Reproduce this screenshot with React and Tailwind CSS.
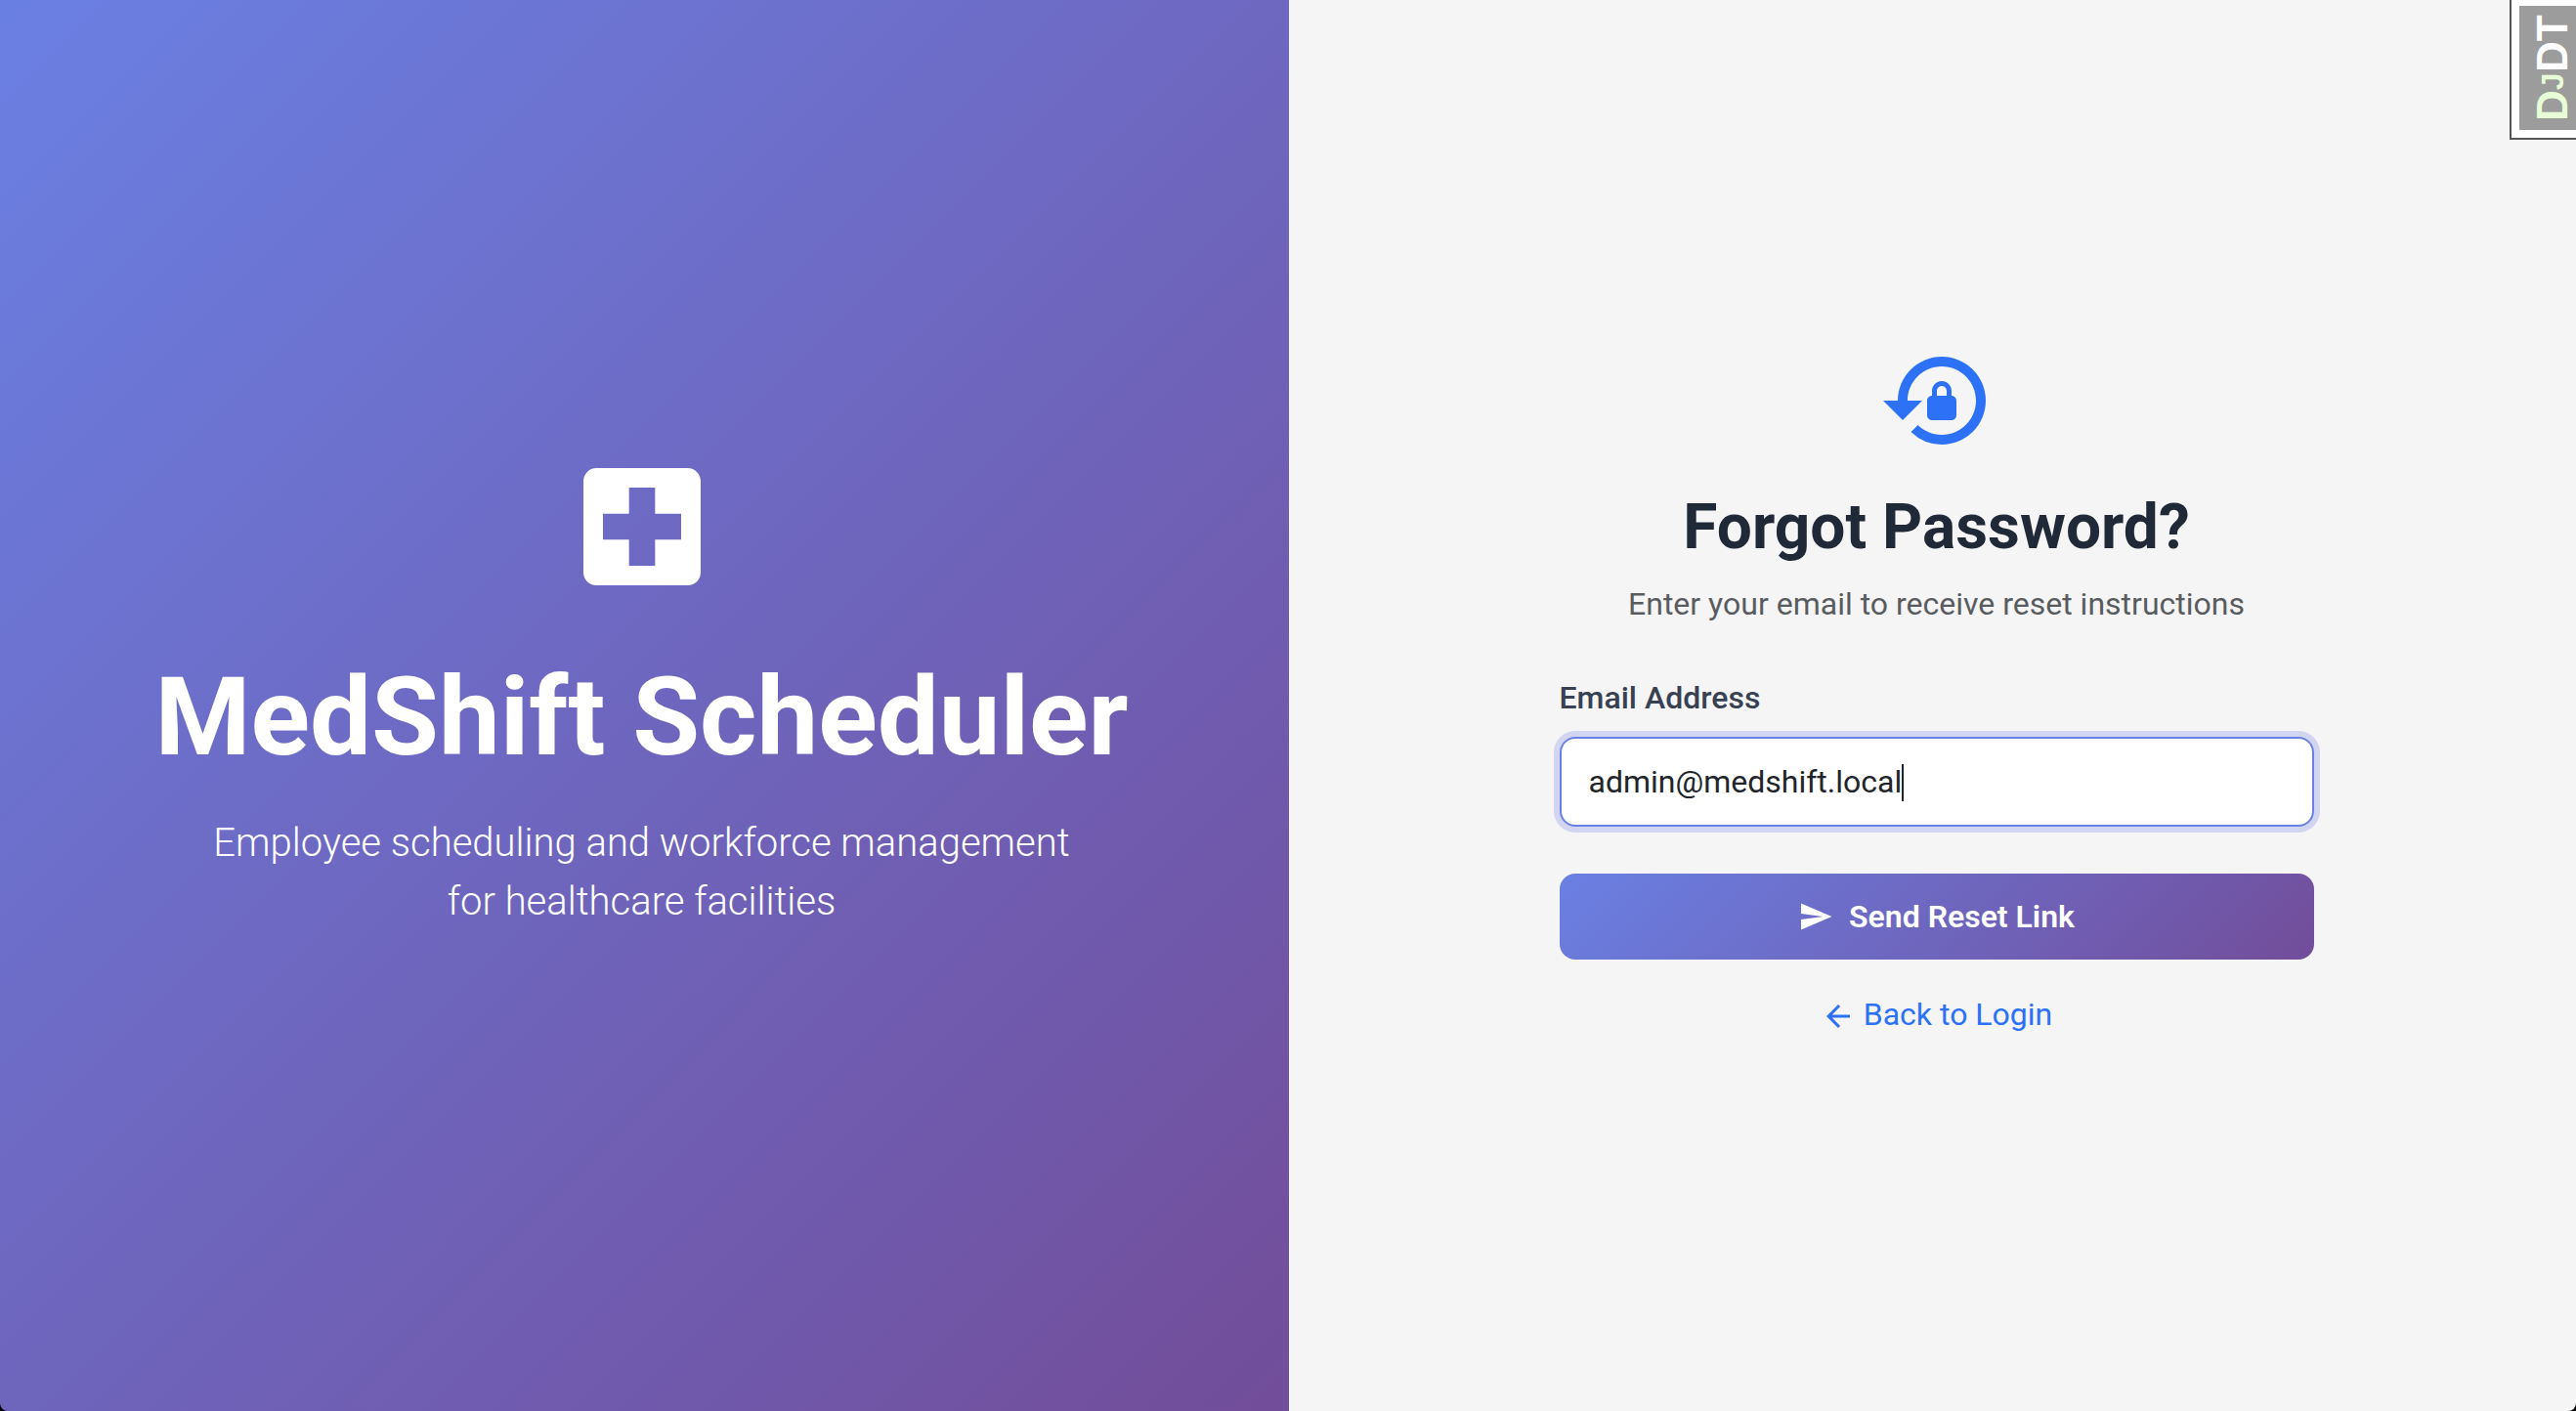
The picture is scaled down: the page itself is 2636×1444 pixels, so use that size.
import { MdLocalHospital, MdLockReset, MdSend, MdArrowBack } from "react-icons/md";

function BrandPanel() {
  return (
    <section className="flex flex-col items-center justify-center bg-[linear-gradient(135deg,#6a80e3,#724d9a)] pb-8 text-center text-white">
      <MdLocalHospital className="size-40" aria-hidden="true" />
      <h1 className="mt-12 text-[112px] leading-[134px] font-bold">MedShift Scheduler</h1>
      <p className="mt-8 text-[40px] leading-[60px] font-light">
        Employee scheduling and workforce management
        <br />
        for healthcare facilities
      </p>
    </section>
  );
}

function ResetForm() {
  return (
    <form className="flex w-[772px] flex-col" onSubmit={(e) => e.preventDefault()}>
      <header className="flex flex-col items-center text-center">
        <MdLockReset className="size-[120px] text-[#2d72f6]" aria-hidden="true" />
        <h2 className="mt-8 text-[64px] leading-[76px] font-bold text-[#1f2937]">Forgot Password?</h2>
        <p className="mt-4 text-[32px] leading-[48px] text-[#595c5f]">
          Enter your email to receive reset instructions
        </p>
      </header>

      <label htmlFor="email" className="mt-12 text-[32px] leading-[48px] font-medium text-[#374151]">
        Email Address
      </label>
      <div className="relative mt-4">
        <input
          id="email"
          type="email"
          defaultValue="admin@medshift.local"
          className="h-[92px] w-full rounded-2xl border-2 border-[#6a80e3] bg-white px-7 text-[32px] text-[#212529] ring-[6px] ring-[#d1d5f1] outline-none"
        />
        <span className="absolute top-7 left-[350px] h-[38px] w-0.5 bg-[#212529]" aria-hidden="true" />
      </div>

      <button
        type="submit"
        className="mt-12 flex h-[88px] items-center justify-center gap-4 rounded-2xl bg-[linear-gradient(135deg,#6a80e3,#724d9a)] text-[32px] font-semibold text-white"
      >
        <MdSend className="size-9" aria-hidden="true" />
        Send Reset Link
      </button>

      <a
        href="#login"
        className="mt-8 flex items-center justify-center gap-2 text-[32px] leading-[48px] text-[#2d72f6]"
      >
        <MdArrowBack className="mt-1 size-9" aria-hidden="true" />
        Back to Login
      </a>
    </form>
  );
}

function DebugToolbarHandle() {
  return (
    <button
      type="button"
      aria-label="Show toolbar"
      className="absolute top-0 right-0 border-b-2 border-l-2 border-[#555] bg-white pt-1.5 pb-2 pl-2 font-['Liberation_Sans',sans-serif]"
    >
      <span className="flex h-[127px] w-[58px] rotate-180 items-center justify-center bg-[#9c9c9c] pr-2.5 text-[44px] leading-none font-bold text-white [writing-mode:vertical-rl]">
        <span className="text-[#e9fcd8]">
          D<span className="text-[32px]">J</span>
        </span>
        DT
      </span>
    </button>
  );
}

export default function App() {
  return (
    <div className="bg-black font-[Roboto,sans-serif]">
      <div className="relative overflow-hidden rounded-b-lg">
        <main className="-mr-2 -ml-1.5 grid min-h-screen grid-cols-2">
          <BrandPanel />
          <section className="flex items-center justify-center bg-[#f5f5f5] pb-8">
            <ResetForm />
          </section>
        </main>
        <DebugToolbarHandle />
      </div>
    </div>
  );
}
